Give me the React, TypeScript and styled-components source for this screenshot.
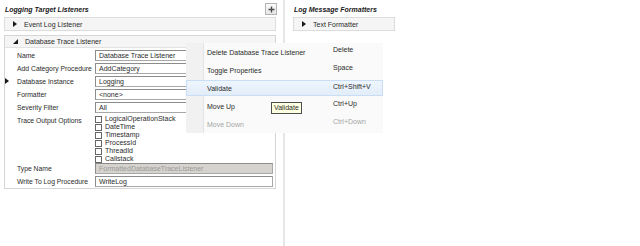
import React from "react";
import styled, { createGlobalStyle } from "styled-components";

const GlobalStyle = createGlobalStyle`
  html, body {
    margin: 0;
    padding: 0;
    background: #ffffff;
  }
  body {
    font-family: "Liberation Sans", Arial, sans-serif;
    font-size: 7px;
    color: #2b2b2b;
  }
`;

const Page = styled.div`
  position: relative;
  width: 640px;
  height: 246px;
  display: flex;
  overflow: hidden;
`;

const LeftPane = styled.div`
  width: 272px;
  padding: 3px 7px 0 4px;
  display: flex;
  flex-direction: column;
`;

const Divider = styled.div`
  width: 2px;
  background: #e6e6e6;
`;

const RightPane = styled.div`
  flex: 1;
  padding: 3px 0 0 8px;
  display: flex;
  flex-direction: column;
`;

const TitleRow = styled.div`
  height: 12px;
  display: flex;
  align-items: center;
  justify-content: space-between;
  padding-left: 1px;
`;

const Title = styled.span`
  font-weight: bold;
  font-style: italic;
  font-size: 7px;
  color: #1a1a1a;
`;

const AddButton = styled.div`
  width: 10px;
  height: 10px;
  margin-right: -1px;
  border: 1px solid #b4b4b4;
  background: linear-gradient(#fbfbfb, #e6e6e6);
  display: flex;
  align-items: center;
  justify-content: center;
`;

const ItemRow = styled.div<{ $width?: number }>`
  margin-top: 2px;
  height: 12px;
  width: ${(p) => (p.$width ? `${p.$width}px` : "auto")};
  border: 1px solid #dcdcdc;
  background: #f5f5f5;
  display: flex;
  align-items: center;
  gap: 7px;
  padding-left: 8px;
`;

const Group = styled.div`
  margin-top: 4px;
  border: 1px solid #d6d6d6;
  display: flex;
  flex-direction: column;
`;

const GroupHeader = styled.div`
  height: 11px;
  background: #f5f5f5;
  border-bottom: 1px solid #e2e2e2;
  display: flex;
  align-items: center;
  gap: 7px;
  padding-left: 8px;
`;

const PropGrid = styled.div`
  display: grid;
  grid-template-columns: 90px 178px;
  grid-template-rows: 11px 11px 11px 11px 11px 46px 11px 11px;
  row-gap: 2px;
  padding: 2px 0 1px 0;
`;

const Label = styled.div`
  display: flex;
  align-items: flex-start;
  padding-top: 1px;
  line-height: 9px;
  font-size: 6.8px;
  white-space: nowrap;
`;

const Marker = styled.span`
  width: 12px;
  flex: none;
  display: flex;
  align-items: center;
  padding-top: 1px;
`;

const Field = styled.div<{ $readOnly?: boolean }>`
  border: 1px solid #a8a8a8;
  border-top-color: #8c8c8c;
  border-left-color: #8c8c8c;
  background: ${(p) => (p.$readOnly ? "#d6d3ce" : "#ffffff")};
  color: ${(p) => (p.$readOnly ? "#9a9a9a" : "#2b2b2b")};
  padding-left: 3px;
  line-height: 9px;
  white-space: nowrap;
  overflow: hidden;
`;

const CheckList = styled.div`
  display: flex;
  flex-direction: column;
`;

const CheckRow = styled.div`
  height: 8px;
  display: flex;
  align-items: center;
  gap: 3px;
  line-height: 8px;
`;

const CheckBox = styled.span`
  width: 5px;
  height: 5px;
  border: 1px solid #666666;
  background: #ffffff;
  flex: none;
`;

const Menu = styled.div`
  position: absolute;
  left: 186px;
  top: 43px;
  width: 197px;
  height: 90px;
  background: linear-gradient(90deg, #f1f1f1 0, #f1f1f1 17px, #e2e3e3 17px, #e2e3e3 18px, #fafafa 18px);
  display: flex;
  flex-direction: column;
`;

const MenuItem = styled.div<{ $active?: boolean; $disabled?: boolean }>`
  height: ${(p) => (p.$active ? "16px" : "18px")};
  margin: ${(p) => (p.$active ? "1px 0" : "0")};
  border: 1px solid ${(p) => (p.$active ? "#c9def5" : "transparent")};
  background: ${(p) => (p.$active ? "linear-gradient(#eef5fc, #e2edf9)" : "transparent")};
  box-sizing: border-box;
  display: flex;
  color: ${(p) => (p.$disabled ? "#a6a6a6" : "#2b2b2b")};
`;

const MenuLabel = styled.span`
  width: 126px;
  padding-left: 20px;
  display: flex;
  align-items: center;
`;

const Shortcut = styled.span`
  padding-top: 2px;
  line-height: 8px;
`;

const Tooltip = styled.div`
  position: absolute;
  left: 271px;
  top: 102px;
  height: 10px;
  padding: 0 2px;
  border: 1px solid #4d4d4d;
  background: #ffffe1;
  line-height: 10px;
  color: #2b2b2b;
`;

const Collapsed = () => (
  <svg width="4" height="6" viewBox="0 0 4 6">
    <path d="M0 0 L4 3 L0 6 Z" fill="#1a1a1a" />
  </svg>
);

const Expanded = () => (
  <svg width="5" height="5" viewBox="0 0 5 5">
    <path d="M5 0 L5 5 L0 5 Z" fill="#1a1a1a" />
  </svg>
);

const PlusIcon = () => (
  <svg width="7" height="7" viewBox="0 0 7 7">
    <path d="M2.8 0.5 H4.2 V2.8 H6.5 V4.2 H4.2 V6.5 H2.8 V4.2 H0.5 V2.8 H2.8 Z" fill="#4a4a4a" />
  </svg>
);

const properties: { label: string; value?: string; marker?: boolean; readOnly?: boolean; checks?: string[] }[] = [
  { label: "Name", value: "Database Trace Listener" },
  { label: "Add Category Procedure", value: "AddCategory" },
  { label: "Database Instance", value: "Logging", marker: true },
  { label: "Formatter", value: "<none>" },
  { label: "Severity Filter", value: "All" },
  {
    label: "Trace Output Options",
    checks: ["LogicalOperationStack", "DateTime", "Timestamp", "ProcessId", "ThreadId", "Callstack"],
  },
  { label: "Type Name", value: "FormattedDatabaseTraceListener", readOnly: true },
  { label: "Write To Log Procedure", value: "WriteLog" },
];

const menuItems: { label: string; shortcut: string; active?: boolean; disabled?: boolean }[] = [
  { label: "Delete Database Trace Listener", shortcut: "Delete" },
  { label: "Toggle Properties", shortcut: "Space" },
  { label: "Validate", shortcut: "Ctrl+Shift+V", active: true },
  { label: "Move Up", shortcut: "Ctrl+Up" },
  { label: "Move Down", shortcut: "Ctrl+Down", disabled: true },
];

export default function App() {
  return (
    <Page>
      <GlobalStyle />
      <LeftPane>
        <TitleRow>
          <Title>Logging Target Listeners</Title>
          <AddButton>
            <PlusIcon />
          </AddButton>
        </TitleRow>
        <ItemRow>
          <Collapsed />
          <span>Event Log Listener</span>
        </ItemRow>
        <Group>
          <GroupHeader>
            <Expanded />
            <span>Database Trace Listener</span>
          </GroupHeader>
          <PropGrid>
            {properties.map((p) => (
              <React.Fragment key={p.label}>
                <Label>
                  <Marker>{p.marker && <Collapsed />}</Marker>
                  {p.label}
                </Label>
                {p.checks ? (
                  <CheckList>
                    {p.checks.map((c) => (
                      <CheckRow key={c}>
                        <CheckBox />
                        {c}
                      </CheckRow>
                    ))}
                  </CheckList>
                ) : (
                  <Field $readOnly={p.readOnly}>{p.value}</Field>
                )}
              </React.Fragment>
            ))}
          </PropGrid>
        </Group>
      </LeftPane>
      <Divider />
      <RightPane>
        <TitleRow>
          <Title>Log Message Formatters</Title>
        </TitleRow>
        <ItemRow $width={92}>
          <Collapsed />
          <span>Text Formatter</span>
        </ItemRow>
      </RightPane>

      <Menu>
        {menuItems.map((m) => (
          <MenuItem key={m.label} $active={m.active} $disabled={m.disabled}>
            <MenuLabel>{m.label}</MenuLabel>
            <Shortcut>{m.shortcut}</Shortcut>
          </MenuItem>
        ))}
      </Menu>
      <Tooltip>Validate</Tooltip>
    </Page>
  );
}
